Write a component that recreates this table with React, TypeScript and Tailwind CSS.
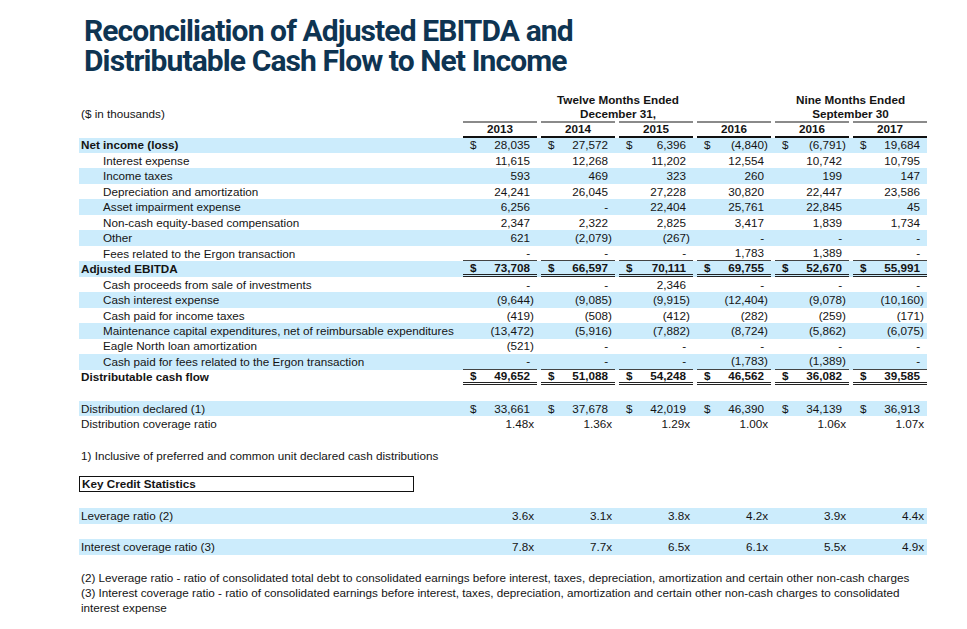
import React from "react";

type Row = {
  label: string;
  vals: string[];
  bold?: boolean;
  indent?: boolean;
  dollar?: boolean;
  blue?: boolean;
  lineBelow?: boolean;
  total?: boolean;
};

const rows: Row[] = [
  { label: "Net income (loss)", bold: true, dollar: true, blue: true, vals: ["28,035", "27,572", "6,396", "(4,840)", "(6,791)", "19,684"] },
  { label: "Interest expense", indent: true, vals: ["11,615", "12,268", "11,202", "12,554", "10,742", "10,795"] },
  { label: "Income taxes", indent: true, blue: true, vals: ["593", "469", "323", "260", "199", "147"] },
  { label: "Depreciation and amortization", indent: true, vals: ["24,241", "26,045", "27,228", "30,820", "22,447", "23,586"] },
  { label: "Asset impairment expense", indent: true, blue: true, vals: ["6,256", "-", "22,404", "25,761", "22,845", "45"] },
  { label: "Non-cash equity-based compensation", indent: true, vals: ["2,347", "2,322", "2,825", "3,417", "1,839", "1,734"] },
  { label: "Other", indent: true, blue: true, vals: ["621", "(2,079)", "(267)", "-", "-", "-"] },
  { label: "Fees related to the Ergon transaction", indent: true, lineBelow: true, vals: ["-", "-", "-", "1,783", "1,389", "-"] },
  { label: "Adjusted EBITDA", bold: true, dollar: true, blue: true, total: true, vals: ["73,708", "66,597", "70,111", "69,755", "52,670", "55,991"] },
  { label: "Cash proceeds from sale of investments", indent: true, vals: ["-", "-", "2,346", "-", "-", "-"] },
  { label: "Cash interest expense", indent: true, blue: true, vals: ["(9,644)", "(9,085)", "(9,915)", "(12,404)", "(9,078)", "(10,160)"] },
  { label: "Cash paid for income taxes", indent: true, vals: ["(419)", "(508)", "(412)", "(282)", "(259)", "(171)"] },
  { label: "Maintenance capital expenditures, net of reimbursable expenditures", indent: true, blue: true, vals: ["(13,472)", "(5,916)", "(7,882)", "(8,724)", "(5,862)", "(6,075)"] },
  { label: "Eagle North loan amortization", indent: true, vals: ["(521)", "-", "-", "-", "-", "-"] },
  { label: "Cash paid for fees related to the Ergon transaction", indent: true, blue: true, lineBelow: true, vals: ["-", "-", "-", "(1,783)", "(1,389)", "-"] },
  { label: "Distributable cash flow", bold: true, dollar: true, total: true, vals: ["49,652", "51,088", "54,248", "46,562", "36,082", "39,585"] },
];

const grid = "grid w-[848px] grid-cols-[383px_repeat(5,78px)_75px]";

const Num = ({ v, dollar, ratio, lineBelow, total }: { v: string; dollar?: boolean; ratio?: boolean; lineBelow?: boolean; total?: boolean }) => {
  const neg = v.startsWith("(");
  const border = total
    ? "border-b-[3px] border-double border-[#222] font-bold"
    : lineBelow
    ? "border-b border-[#444]"
    : "";
  return (
    <div className={`ml-px w-[74px] h-full flex items-center justify-between pl-[7px] pr-[3px] ${border}`}>
      <span>{dollar ? "$" : ""}</span>
      <span>
        {v}
        {!neg && !ratio && <span className="invisible">)</span>}
      </span>
    </div>
  );
};

export default function App() {
  return (
    <div className="w-[967px] h-[629px] bg-white text-[#141414] font-['Liberation_Sans',Arial,sans-serif] text-[11.7px] leading-none overflow-hidden">
      <div className="pt-[16px] pl-[84px] font-['Roboto',sans-serif] font-bold text-[30px] leading-[30px] tracking-[-0.9px] text-[#0e3452]">
        <h1>Reconciliation of Adjusted EBITDA and</h1>
        <h1>Distributable Cash Flow to Net Income</h1>
      </div>

      <div className="pl-[79px] pt-[17px]">
        {/* column headings */}
        <div className={`${grid} h-[14px] items-center font-bold`}>
          <div />
          <div className="col-span-4 text-center">Twelve Months Ended</div>
          <div className="col-span-2 text-center">Nine Months Ended</div>
        </div>
        <div className={`${grid} h-[14px] items-center`}>
          <div className="pl-[2px]">($ in thousands)</div>
          <div className="col-span-4 text-center font-bold">December 31,</div>
          <div className="col-span-2 text-center font-bold">September 30</div>
        </div>
        <div className={`${grid} h-[16.5px] font-bold`}>
          <div />
          {["2013", "2014", "2015", "2016", "2016", "2017"].map((y, i) => (
            <div key={i} className="ml-px w-[74px] h-full flex items-center justify-center border-t-2 border-[#8a8a8a] border-b-2 border-b-[#111]">
              {y}
            </div>
          ))}
        </div>

        {/* body */}
        {rows.map((r) => (
          <div key={r.label} className={`${grid} h-[15.47px] ${r.blue ? "bg-[#ccecfc]" : ""}`}>
            <div className={`flex items-center ${r.indent ? "pl-[24px]" : "pl-[2px]"} ${r.bold ? "font-bold" : ""}`}>{r.label}</div>
            {r.vals.map((v, i) => (
              <Num key={i} v={v} dollar={r.dollar} lineBelow={r.lineBelow} total={r.total} />
            ))}
          </div>
        ))}

        {/* distributions */}
        <div className="pt-[16px]">
          <div className={`${grid} h-[15px] bg-[#ccecfc]`}>
            <div className="flex items-center pl-[2px]">Distribution declared (1)</div>
            {["33,661", "37,678", "42,019", "46,390", "34,139", "36,913"].map((v, i) => (
              <Num key={i} v={v} dollar />
            ))}
          </div>
          <div className={`${grid} h-[15px]`}>
            <div className="flex items-center pl-[2px]">Distribution coverage ratio</div>
            {["1.48x", "1.36x", "1.29x", "1.00x", "1.06x", "1.07x"].map((v, i) => (
              <Num key={i} v={v} ratio />
            ))}
          </div>
        </div>

        <p className="pl-[2px] pt-[19px]">1) Inclusive of preferred and common unit declared cash distributions</p>

        <div className="mt-[14px] w-[335px] h-[16px] border border-[#111] flex items-center pl-[2px] font-bold">Key Credit Statistics</div>

        <div className={`${grid} mt-[16.5px] h-[16px] bg-[#ccecfc]`}>
          <div className="flex items-center pl-[2px]">Leverage ratio (2)</div>
          {["3.6x", "3.1x", "3.8x", "4.2x", "3.9x", "4.4x"].map((v, i) => (
            <Num key={i} v={v} ratio />
          ))}
        </div>
        <div className={`${grid} mt-[15px] h-[16px] bg-[#ccecfc]`}>
          <div className="flex items-center pl-[2px]">Interest coverage ratio (3)</div>
          {["7.8x", "7.7x", "6.5x", "6.1x", "5.5x", "4.9x"].map((v, i) => (
            <Num key={i} v={v} ratio />
          ))}
        </div>

        <div className="pl-[2px] pt-[15px] w-[848px] leading-[15px]">
          <p>(2) Leverage ratio - ratio of consolidated total debt to consolidated earnings before interest, taxes, depreciation, amortization and certain other non-cash charges</p>
          <p>(3) Interest coverage ratio - ratio of consolidated earnings before interest, taxes, depreciation, amortization and certain other non-cash charges to consolidated interest expense</p>
        </div>
      </div>
    </div>
  );
}
